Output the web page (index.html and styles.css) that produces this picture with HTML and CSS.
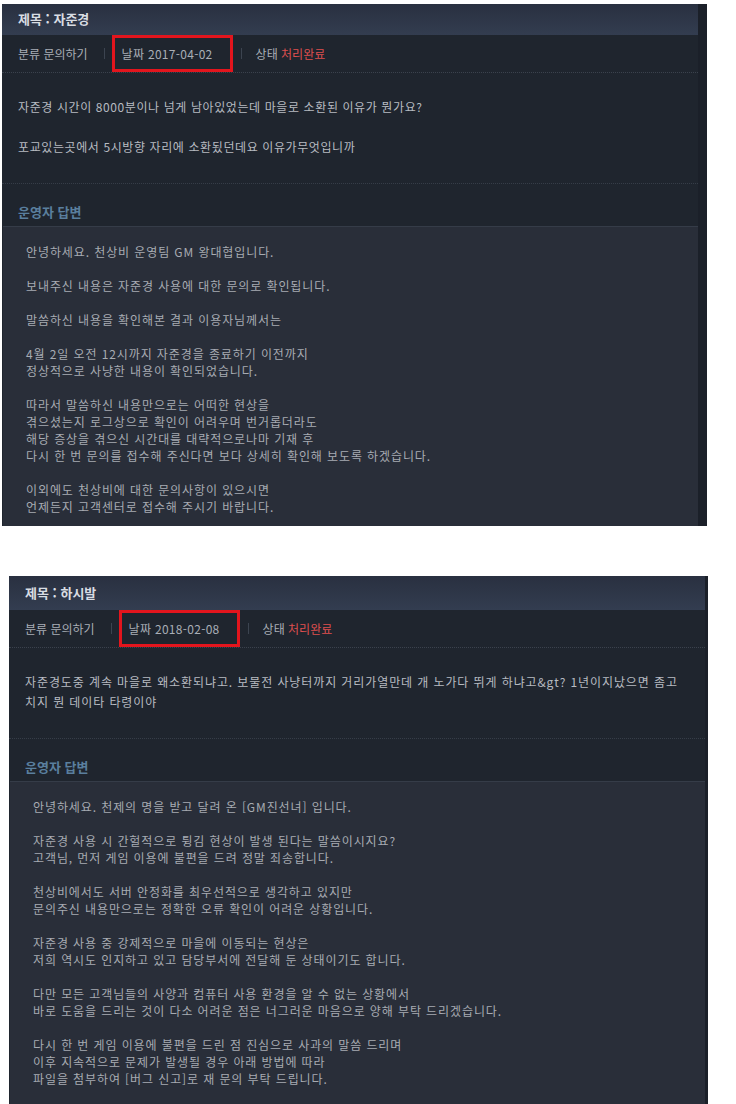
FILE: index.html
```html
<!DOCTYPE html>
<html lang="ko">
<head>
    <meta charset="UTF-8">
    <meta name="viewport" content="width=device-width, initial-scale=1.0">
    <title>문의 내역</title>
    <link rel="stylesheet" href="styles.css">
</head>
<body>
    <div class="board first">
        <div class="board-inner">
            <div class="board-title">제목 : 자준경</div>
            <div class="board-meta">
                <span class="meta-item">분류 문의하기</span>
                <span class="sep"></span>
                <span class="meta-item marked">날짜 2017-04-02</span>
                <span class="sep"></span>
                <span class="meta-item">상태 <em class="done">처리완료</em></span>
            </div>
            <div class="question">
                자준경 시간이 8000분이나 넘게 남아있었는데 마을로 소환된 이유가 뭔가요?<br><br>
                포교있는곳에서 5시방향 자리에 소환됬던데요 이유가무엇입니까
            </div>
            <div class="answer-title">운영자 답변</div>
            <div class="answer">
                안녕하세요. 천상비 운영팀 GM 왕대협입니다.<br><br>
                보내주신 내용은 자준경 사용에 대한 문의로 확인됩니다.<br><br>
                말씀하신 내용을 확인해본 결과 이용자님께서는<br><br>
                4월 2일 오전 12시까지 자준경을 종료하기 이전까지<br>
                정상적으로 사냥한 내용이 확인되었습니다.<br><br>
                따라서 말씀하신 내용만으로는 어떠한 현상을<br>
                겪으셨는지 로그상으로 확인이 어려우며 번거롭더라도<br>
                해당 증상을 겪으신 시간대를 대략적으로나마 기재 후<br>
                다시 한 번 문의를 접수해 주신다면 보다 상세히 확인해 보도록 하겠습니다.<br><br>
                이외에도 천상비에 대한 문의사항이 있으시면<br>
                언제든지 고객센터로 접수해 주시기 바랍니다.
            </div>
        </div>
    </div>

    <div class="board second">
        <div class="board-inner">
            <div class="board-title">제목 : 하시발</div>
            <div class="board-meta">
                <span class="meta-item">분류 문의하기</span>
                <span class="sep"></span>
                <span class="meta-item marked">날짜 2018-02-08</span>
                <span class="sep"></span>
                <span class="meta-item">상태 <em class="done">처리완료</em></span>
            </div>
            <div class="question">
                자준경도중 계속 마을로 왜소환되냐고. 보물전 사냥터까지 거리가열만데 개 노가다 뛰게 하냐고&amp;gt? 1년이지났으면 좀고<br>
                치지 뭔 데이타 타령이야
            </div>
            <div class="answer-title">운영자 답변</div>
            <div class="answer">
                안녕하세요. 천제의 명을 받고 달려 온 [GM진선녀] 입니다.<br><br>
                자준경 사용 시 간헐적으로 튕김 현상이 발생 된다는 말씀이시지요?<br>
                고객님, 먼저 게임 이용에 불편을 드려 정말 죄송합니다.<br><br>
                천상비에서도 서버 안정화를 최우선적으로 생각하고 있지만<br>
                문의주신 내용만으로는 정확한 오류 확인이 어려운 상황입니다.<br><br>
                자준경 사용 중 강제적으로 마을에 이동되는 현상은<br>
                저희 역시도 인지하고 있고 담당부서에 전달해 둔 상태이기도 합니다.<br><br>
                다만 모든 고객님들의 사양과 컴퓨터 사용 환경을 알 수 없는 상황에서<br>
                바로 도움을 드리는 것이 다소 어려운 점은 너그러운 마음으로 양해 부탁 드리겠습니다.<br><br>
                다시 한 번 게임 이용에 불편을 드린 점 진심으로 사과의 말씀 드리며<br>
                이후 지속적으로 문제가 발생될 경우 아래 방법에 따라<br>
                파일을 첨부하여 [버그 신고]로 재 문의 부탁 드립니다.
            </div>
        </div>
    </div>
</body>
</html>
```

FILE: styles.css
```css
body {
    margin: 0;
    padding: 4px 0 0 0;
    background-color: #fff;
    font-family: "Noto Sans CJK KR", "Noto Sans", sans-serif;
    font-size: 12px;
    color: #b3b7bd;
}
.board {
    display: flex;
    width: 696px;
    background-color: #1b2029;
    padding-right: 9px;
    margin-left: 2px;
}
.board.second {
    width: 696px;
    padding-right: 3px;
    margin: 50px 0 0 9px;
}
.board-inner {
    flex: 1;
    background-color: #1f252e;
}
.board-title {
    height: 31px;
    line-height: 29px;
    padding: 0 16px;
    background: linear-gradient(#293040, #333d50);
    color: #d9dde3;
    font-size: 13px;
    font-weight: bold;
}
.second .board-title {
    height: 34px;
    line-height: 34px;
}
.board-meta {
    display: flex;
    align-items: center;
    height: 37px;
    padding: 0 16px;
    border-bottom: 1px dotted #3b424d;
    color: #a9aeb6;
}
.sep {
    width: 1px;
    height: 11px;
    background-color: #3c4450;
    margin: 0 14px 0 16px;
}
.meta-item.marked {
    border: 3px solid #e3151d;
    padding: 7px 17px 7px 7px;
    margin-left: -7px;
    margin-right: -8px;
    letter-spacing: 0.3px;
}
.done {
    font-style: normal;
    color: #dd4f4f;
}
.question {
    padding: 24px 16px 26px;
    line-height: 20px;
    letter-spacing: 0.6px;
    border-bottom: 1px dotted #363d48;
    color: #b7bbc1;
}
.second .question {
    letter-spacing: 0.9px;
}
.answer-title {
    padding: 20px 16px 6px;
    line-height: 16px;
    font-size: 13px;
    font-weight: bold;
    color: #5a7f9e;
}
.answer {
    margin-left: 1px;
    padding: 16px 23px 11px;
    line-height: 17px;
    letter-spacing: 0.9px;
    background-color: #292e39;
    border-top: 1px solid #353c48;
    color: #a7abb2;
}
.second .answer {
    padding-bottom: 30px;
}
```
